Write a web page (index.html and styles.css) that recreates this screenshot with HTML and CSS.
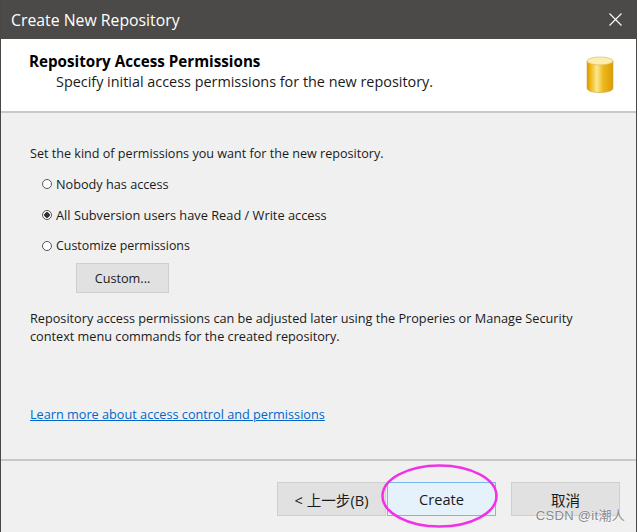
FILE: index.html
```html
<!DOCTYPE html>
<html lang="en">
<head>
    <meta charset="UTF-8">
    <title>Create New Repository</title>
    <link rel="stylesheet" href="styles.css">
</head>
<body>
    <div class="window">
        <div class="titlebar">
            <span class="title">Create New Repository</span>
            <svg class="close-icon" width="13" height="13" viewBox="0 0 13 13">
                <path d="M0.500 0.500L12.500 12.500M12.500 0.500L0.500 12.500" stroke="#fff" stroke-width="1.1" fill="none"/>
            </svg>
        </div>
        <div class="header">
            <div class="header-text">
                <div class="header-title">Repository Access Permissions</div>
                <div class="header-sub">Specify initial access permissions for the new repository.</div>
            </div>
            <svg class="db-icon" width="28" height="38" viewBox="0 0 28 38">
                <defs>
                    <linearGradient id="dbside" x1="0" y1="0" x2="1" y2="0">
                        <stop offset="0" stop-color="#d89a08"/>
                        <stop offset="0.12" stop-color="#eeb40e"/>
                        <stop offset="0.38" stop-color="#fbe88f"/>
                        <stop offset="0.62" stop-color="#eeb81c"/>
                        <stop offset="1" stop-color="#dc9c04"/>
                    </linearGradient>
                </defs>
                <path d="M1 5V32C1 35 7 36.500 14 36.500S27 35 27 32V5Z" fill="url(#dbside)" stroke="#c9a24a" stroke-width="0.6"/>
                <ellipse cx="14" cy="5" rx="13" ry="4" fill="#fbeeb0" stroke="#d8b04a" stroke-width="0.6"/>
            </svg>
        </div>
        <div class="content">
            <p class="intro">Set the kind of permissions you want for the new repository.</p>
            <div class="radio-row">
                <span class="radio"></span>
                <span>Nobody has access</span>
            </div>
            <div class="radio-row">
                <span class="radio checked"></span>
                <span class="wide-label">All Subversion users have Read / Write access</span>
            </div>
            <div class="radio-row">
                <span class="radio"></span>
                <span class="tight-label">Customize permissions</span>
            </div>
            <div class="custom-row">
                <button class="btn custom-btn">Custom...</button>
            </div>
            <p class="note">Repository access permissions can be adjusted later using the Properies or Manage Security<br>context menu commands for the created repository.</p>
            <a class="learn-link" href="#">Learn more about access control and permissions</a>
        </div>
        <div class="footer">
            <button class="btn nav-btn">&lt; 上一步(B)</button>
            <button class="btn nav-btn primary">Create</button>
            <button class="btn nav-btn cancel">取消</button>
        </div>
        <svg class="highlight" width="120" height="66" viewBox="0 0 120 66">
            <ellipse cx="58.500" cy="33" rx="57" ry="30.500" fill="none" stroke="#f032e6" stroke-width="2.500"/>
        </svg>
        <span class="watermark">CSDN @it潮人</span>
    </div>
</body>
</html>
```

FILE: styles.css
```css
html, body {
    margin: 0;
    padding: 0;
}
body {
    font-family: "Open Sans", "Noto Sans CJK SC", sans-serif;
    font-size: 12.7px;
    color: #1a1a1a;
    background-color: #f0f0f0;
}
.window {
    position: relative;
    width: 637px;
    height: 532px;
    box-sizing: border-box;
    display: flex;
    flex-direction: column;
    border-left: 1px solid #4a4846;
    border-right: 1px solid #4a4846;
    overflow: hidden;
}
.titlebar {
    height: 39px;
    flex: none;
    display: flex;
    align-items: center;
    justify-content: space-between;
    padding: 0 14px 0 10px;
    background-color: #4c4a48;
    color: #fff;
}
.title {
    font-size: 15.8px;
}
.close-icon {
    display: block;
}
.header {
    height: 74px;
    flex: none;
    box-sizing: border-box;
    display: flex;
    justify-content: space-between;
    align-items: center;
    padding: 0 22px 0 28px;
    background-color: #fff;
    border-bottom: 2px solid #c8c8c8;
}
.header-text {
    margin-bottom: 7px;
}
.header-title {
    font-size: 15.2px;
    font-weight: 700;
    line-height: 20px;
    color: #000;
}
.header-sub {
    font-size: 14.4px;
    line-height: 21px;
    padding-left: 27px;
}
.content {
    flex: 1;
    padding: 32px 29px 0;
}
.intro {
    margin: 0 0 13px;
    line-height: 17px;
    font-size: 12.6px;
}
.radio-row {
    display: flex;
    align-items: center;
    gap: 4px;
    height: 17px;
    margin: 0 0 14px 12px;
}
.wide-label {
    font-size: 12.8px;
}
.tight-label {
    font-size: 12.4px;
}
.radio {
    width: 10px;
    height: 10px;
    box-sizing: border-box;
    border: 1px solid #555;
    border-radius: 50%;
    background-color: #fff;
}
.radio.checked {
    background: radial-gradient(circle, #333 0, #333 2.500px, #fff 3px);
}
.custom-row {
    margin: -5px 0 0 46px;
}
.btn {
    font-family: inherit;
    font-size: 12.7px;
    color: #1a1a1a;
    background-color: #e1e1e1;
    border: 1px solid #cfcfcf;
    padding: 0;
}
.custom-btn {
    display: block;
    width: 93px;
    height: 30px;
}
.note {
    margin: 16px 0 0;
    line-height: 18px;
}
.learn-link {
    display: block;
    margin-top: 60px;
    color: #0066cc;
}
.footer {
    height: 73px;
    flex: none;
    box-sizing: border-box;
    display: flex;
    align-items: flex-start;
    padding: 21px 16px 0 276px;
    border-top: 2px solid #c8c8c8;
}
.nav-btn {
    width: 109px;
    height: 34px;
    font-size: 14.6px;
}
.primary {
    margin-left: 1px;
    background-color: #e5f1fb;
    border-color: #7ab8ec;
}
.cancel {
    margin-left: 15px;
}
.highlight {
    position: absolute;
    left: 380px;
    top: 463px;
}
.watermark {
    position: absolute;
    right: 11px;
    top: 505px;
    font-family: "Liberation Sans", "Noto Sans CJK SC", sans-serif;
    font-size: 13px;
    letter-spacing: 0.3px;
    color: #8a8a8a;
    text-shadow: 0 0 2px #fff;
}
```
